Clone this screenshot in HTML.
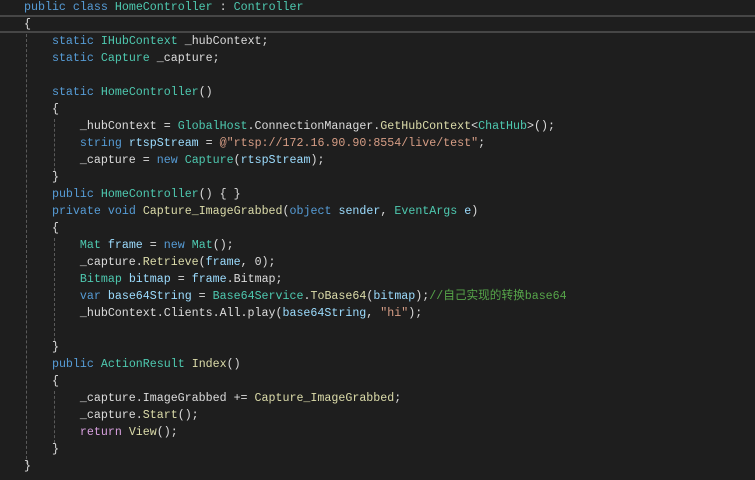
<!DOCTYPE html>
<html><head><meta charset="utf-8"><style>
html,body{margin:0;padding:0;background:#1e1e1e;width:755px;height:480px;overflow:hidden}
#c{position:absolute;left:24px;top:-1px;font-family:"Liberation Mono","Noto Sans CJK SC",monospace;font-size:11.65px;line-height:17px;color:#dcdcdc;white-space:pre}
.hl{position:absolute;left:0;top:15px;width:755px;height:14px;border-top:2px solid #464646;border-bottom:2px solid #464646}
.g{position:absolute;width:0;border-left:1px dashed #5a5a5a}
.k{color:#569cd6}.t{color:#4ec9b0}.m{color:#dcdcaa}.s{color:#d69d85}.c{color:#57a64a}.v{color:#9cdcfe}.r{color:#d8a0df}
</style></head><body>
<div class="hl"></div>
<div class="g" style="left:26px;top:34px;height:430px"></div>
<div class="g" style="left:54px;top:119px;height:52px"></div>
<div class="g" style="left:54px;top:238px;height:103px"></div>
<div class="g" style="left:54px;top:391px;height:52px"></div>
<div id="c"><span class="k">public</span> <span class="k">class</span> <span class="t">HomeController</span> : <span class="t">Controller</span>
{
    <span class="k">static</span> <span class="t">IHubContext</span> _hubContext;
    <span class="k">static</span> <span class="t">Capture</span> _capture;

    <span class="k">static</span> <span class="t">HomeController</span>()
    {
        _hubContext = <span class="t">GlobalHost</span>.ConnectionManager.<span class="m">GetHubContext</span>&lt;<span class="t">ChatHub</span>&gt;();
        <span class="k">string</span> <span class="v">rtspStream</span> = <span class="s">@"rtsp://172.16.90.90:8554/live/test"</span>;
        _capture = <span class="k">new</span> <span class="t">Capture</span>(<span class="v">rtspStream</span>);
    }
    <span class="k">public</span> <span class="t">HomeController</span>() { }
    <span class="k">private</span> <span class="k">void</span> <span class="m">Capture_ImageGrabbed</span>(<span class="k">object</span> <span class="v">sender</span>, <span class="t">EventArgs</span> <span class="v">e</span>)
    {
        <span class="t">Mat</span> <span class="v">frame</span> = <span class="k">new</span> <span class="t">Mat</span>();
        _capture.<span class="m">Retrieve</span>(<span class="v">frame</span>, 0);
        <span class="t">Bitmap</span> <span class="v">bitmap</span> = <span class="v">frame</span>.Bitmap;
        <span class="k">var</span> <span class="v">base64String</span> = <span class="t">Base64Service</span>.<span class="m">ToBase64</span>(<span class="v">bitmap</span>);<span class="c">//自己实现的转换base64</span>
        _hubContext.Clients.All.play(<span class="v">base64String</span>, <span class="s">"hi"</span>);

    }
    <span class="k">public</span> <span class="t">ActionResult</span> <span class="m">Index</span>()
    {
        _capture.ImageGrabbed += <span class="m">Capture_ImageGrabbed</span>;
        _capture.<span class="m">Start</span>();
        <span class="r">return</span> <span class="m">View</span>();
    }
}</div>
</body></html>
